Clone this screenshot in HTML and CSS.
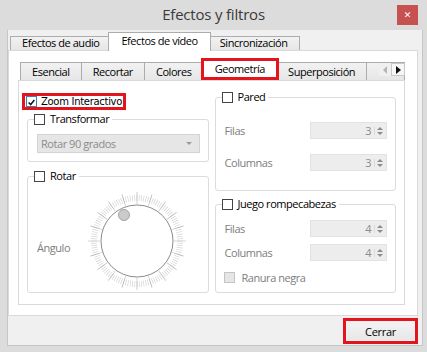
FILE: index.html
```html
<!DOCTYPE html>
<html lang="es">
<head>
    <meta charset="UTF-8">
    <title>Efectos y filtros</title>
    <link rel="stylesheet" href="styles.css">
</head>
<body>
    <div class="window">
        <div class="titlebar">
            <h1 class="title">Efectos y filtros</h1>
            <button class="close" aria-label="Cerrar">&#x2715;</button>
        </div>

        <div class="client">
            <div class="tabbar main-tabs">
                <div class="tab">Efectos de audio</div>
                <div class="tab active">Efectos de vídeo</div>
                <div class="tab">Sincronización</div>
            </div>

            <div class="pane outer-pane">
                <div class="tabbar sub-tabs">
                    <div class="tab">Esencial</div>
                    <div class="tab">Recortar</div>
                    <div class="tab">Colores</div>
                    <div class="tab active marked">Geometría</div>
                    <div class="tab">Superposición</div>
                    <div class="tab partial"></div>
                    <div class="scroller">
                        <span class="arrow left"></span>
                        <span class="arrow right"></span>
                    </div>
                </div>

                <div class="pane inner-pane">
                    <div class="col">
                        <label class="check-row marked">
                            <span class="check checked">
                                <svg viewBox="0 0 11 11" width="11" height="11"><path d="M2 5.5 L4.5 8 L9 2.5" fill="none" stroke="#111" stroke-width="1.8"/></svg>
                            </span>
                            <span class="zoom-label">Zoom Interactivo</span>
                        </label>

                        <fieldset class="group transform">
                            <legend><span class="check"></span>Transformar</legend>
                            <div class="select">
                                <span>Rotar 90 grados</span>
                                <span class="caret"></span>
                            </div>
                        </fieldset>

                        <fieldset class="group rotate">
                            <legend><span class="check"></span>Rotar</legend>
                            <div class="dial-row">
                                <span class="muted angle">Ángulo</span>
                                <svg class="dial" viewBox="0 0 100 100">
                                    <circle cx="50" cy="50" r="43" fill="none" stroke="#cdcdcd" stroke-width="6" pathLength="360" stroke-dasharray="0.8 2.2" stroke-dashoffset="0.4"/>
                                    <circle cx="50" cy="50" r="43" fill="none" stroke="#b0b0b0" stroke-width="12" pathLength="360" stroke-dasharray="0.8 17.2" stroke-dashoffset="0.4"/>
                                    <circle cx="50" cy="50" r="36" fill="#fff" stroke="#8c8c8c" stroke-width="1"/>
                                    <circle cx="37" cy="24" r="5.5" fill="#cbcbcb" stroke="#a3a3a3" stroke-width="1"/>
                                </svg>
                            </div>
                        </fieldset>
                    </div>

                    <div class="col">
                        <fieldset class="group wall">
                            <legend><span class="check"></span>Pared</legend>
                            <div class="fields">
                                <span class="muted">Filas</span>
                                <div class="spin"><span>3</span><span class="spin-arrows"><i class="up"></i><i class="down"></i></span></div>
                                <span class="muted">Columnas</span>
                                <div class="spin"><span>3</span><span class="spin-arrows"><i class="up"></i><i class="down"></i></span></div>
                            </div>
                        </fieldset>

                        <fieldset class="group puzzle">
                            <legend><span class="check"></span>Juego rompecabezas</legend>
                            <div class="fields">
                                <span class="muted">Filas</span>
                                <div class="spin"><span>4</span><span class="spin-arrows"><i class="up"></i><i class="down"></i></span></div>
                                <span class="muted">Columnas</span>
                                <div class="spin"><span>4</span><span class="spin-arrows"><i class="up"></i><i class="down"></i></span></div>
                            </div>
                            <label class="check-row disabled">
                                <span class="check"></span>
                                <span class="muted">Ranura negra</span>
                            </label>
                        </fieldset>
                    </div>
                </div>
            </div>

            <div class="footer">
                <button class="btn marked">Cerrar</button>
            </div>
        </div>
    </div>
</body>
</html>
```

FILE: styles.css
```css
* {
    box-sizing: border-box;
}

body {
    margin: 0;
    width: 427px;
    height: 352px;
    overflow: hidden;
    background-color: #dcdcdc;
    font-family: 'Open Sans', 'Noto Sans', sans-serif;
    font-size: 11px;
    letter-spacing: -0.45px;
    color: #000;
}

.window {
    display: flex;
    flex-direction: column;
    height: 352px;
}

/* title bar */
.titlebar {
    height: 30px;
    display: grid;
    grid-template-columns: 1fr auto 1fr;
}

.title {
    grid-column: 2;
    margin: 0;
    padding-top: 4px;
    font-size: 15px;
    font-weight: normal;
    letter-spacing: -0.2px;
    color: #3a3a3a;
}

.close {
    grid-column: 3;
    justify-self: end;
    width: 21px;
    height: 20px;
    margin: 5px 9px 0 0;
    padding: 0;
    border: none;
    background-color: #c75050;
    color: #fff;
    font: bold 9px 'DejaVu Sans', sans-serif;
}

.client {
    flex: 1;
    display: flex;
    flex-direction: column;
    margin: 0 4px 6px 7px;
    padding-right: 4px;
    background-color: #f0f0f0;
    border: 1px solid #c6c6c6;
    border-top: none;
}

/* tabs */
.tabbar {
    display: flex;
    align-items: flex-end;
    padding-left: 2px;
    position: relative;
}

.tab {
    border: 1px solid #acacac;
    border-bottom: none;
    border-left: none;
    background: linear-gradient(#f2f2f2, #e6e6e6);
    padding: 0 11px;
    white-space: nowrap;
    position: relative;
}

.tab:first-child {
    border-left: 1px solid #acacac;
}

.tab.active {
    background: #fff;
    border-left: 1px solid #acacac;
    margin: 0 -2px -1px -3px;
    padding: 0 13px;
    z-index: 1;
}

.main-tabs {
    height: 20px;
}

.main-tabs .tab {
    height: 14px;
    line-height: 12px;
}

.main-tabs .tab.active {
    height: 19px;
    line-height: 16px;
    padding: 0 12px;
}

.sub-tabs {
    height: 22px;
    overflow: hidden;
}

.sub-tabs .tab {
    height: 18px;
    line-height: 17px;
}

.sub-tabs .tab.active {
    height: 22px;
    margin-bottom: 0;
    line-height: 20px;
}

.sub-tabs .tab.partial {
    width: 40px;
}

.marked {
    outline: 3px solid #e3141c;
    outline-offset: -3px;
}

.scroller {
    position: absolute;
    right: 0;
    top: 5px;
    width: 26px;
    height: 13px;
    display: flex;
    background-color: #f0f0f0;
    z-index: 2;
}

.arrow {
    flex: 1;
    display: flex;
    align-items: center;
    justify-content: center;
}

.arrow.right {
    border: 1px solid #c8c8c8;
    background-color: #f7f7f7;
}

.arrow::before {
    content: '';
    border-top: 4px solid transparent;
    border-bottom: 4px solid transparent;
}

.arrow.left::before {
    border-right: 4px solid #b5b5b5;
}

.arrow.right::before {
    border-left: 5px solid #111;
}

/* panes */
.pane {
    background-color: #fff;
    border: 1px solid #d9d9d9;
}

.outer-pane {
    flex: 1;
    display: flex;
    flex-direction: column;
    padding: 7px 12px 10px 9px;
}

.inner-pane {
    flex: 1;
    display: grid;
    grid-template-columns: 1fr 1fr;
    column-gap: 6px;
    padding: 0 8px 11px 8px;
}

.col {
    display: flex;
    flex-direction: column;
}

/* check boxes */
.check-row {
    display: flex;
    align-items: center;
    gap: 4px;
}

.check {
    width: 11px;
    height: 11px;
    border: 1px solid #444;
    background-color: #fff;
    display: inline-flex;
    flex-shrink: 0;
}

.check.checked {
    border-color: #3c7fb1;
}

.check-row.marked {
    align-self: flex-start;
    height: 17px;
    margin: 12px 0 0 -5px;
    padding: 0 4px;
}

.zoom-label {
    font-family: 'DejaVu Sans', sans-serif;
    font-size: 10px;
    letter-spacing: -0.3px;
}

.check-row.disabled .check {
    border-color: #c4c4c4;
    background-color: #e6e6e6;
}

.muted {
    color: #7d7d7d;
}

/* group boxes */
.group {
    margin: 0;
    border: 1px solid #dcdcdc;
    border-radius: 3px;
    padding: 0 8px 0 9px;
    min-width: 0;
}

.group legend {
    display: flex;
    align-items: center;
    gap: 5px;
    margin-left: -3px;
    padding: 0 3px 0 0;
    line-height: 14px;
}

.transform {
    margin-top: 2px;
    padding-top: 8px;
    padding-bottom: 8px;
}

.select {
    height: 19px;
    display: flex;
    align-items: center;
    justify-content: space-between;
    padding: 0 7px 0 3px;
    border: 1px solid #d3d3d3;
    background-color: #e6e6e6;
    color: #8b8b8b;
}

.caret {
    border-left: 3px solid transparent;
    border-right: 3px solid transparent;
    border-top: 3px solid #9c9c9c;
}

.rotate {
    flex: 1;
    margin-top: 7px;
}

.dial-row {
    display: flex;
    align-items: center;
    justify-content: space-between;
    padding: 8px 13px 0 0;
}

.angle {
    padding-top: 12px;
}

.dial {
    width: 100px;
    height: 100px;
    flex-shrink: 0;
}

.wall {
    margin-top: 9px;
    padding-top: 18px;
    padding-bottom: 19px;
}

.fields {
    display: grid;
    grid-template-columns: 1fr 77px;
    align-items: center;
    row-gap: 15px;
}

.puzzle {
    flex: 1;
    margin-top: 6px;
    padding-top: 9px;
}

.puzzle .fields {
    row-gap: 7px;
}

.puzzle .check-row {
    margin: 9px 0 0 -1px;
    gap: 7px;
}

.spin {
    height: 17px;
    display: flex;
    align-items: center;
    justify-content: flex-end;
    gap: 3px;
    padding-right: 3px;
    border: 1px solid #e2e2e2;
    background-color: #ededed;
    color: #8b8b8b;
}

.spin-arrows {
    display: flex;
    flex-direction: column;
    gap: 2px;
    padding-left: 2px;
    border-left: 1px solid #dadada;
}

.spin-arrows i {
    border-left: 3px solid transparent;
    border-right: 3px solid transparent;
}

.spin-arrows .up {
    border-bottom: 3px solid #8c8c8c;
}

.spin-arrows .down {
    border-top: 3px solid #8c8c8c;
}

/* bottom */
.footer {
    height: 29px;
    display: flex;
    align-items: center;
    justify-content: flex-end;
    padding-top: 1px;
}

.btn {
    width: 75px;
    height: 26px;
    padding: 3px;
    font-family: 'Open Sans', 'Noto Sans', sans-serif;
    font-size: 11px;
    letter-spacing: -0.3px;
    color: #000;
    border: 1px solid #adadad;
    background: linear-gradient(#f4f4f4, #e6e6e6);
    background-clip: content-box;
}
```
